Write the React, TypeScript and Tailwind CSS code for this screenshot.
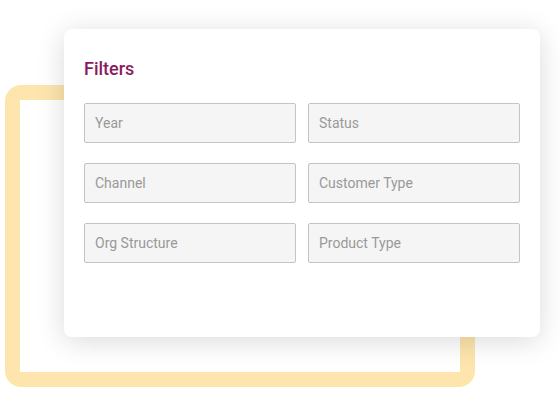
const FIELDS = ["Year", "Status", "Channel", "Customer Type", "Org Structure", "Product Type"];

export default function App() {
  return (
    <div className="relative w-[560px] h-[400px] bg-white overflow-hidden" style={{ fontFamily: "Roboto, 'Noto Sans', sans-serif" }}>
      {/* yellow frame behind the card */}
      <div className="absolute left-[5px] top-[85px] w-[470px] h-[302px] border-[15px] border-[#fee5ad] rounded-[16px]" />

      <div className="absolute left-[64px] top-[29px] w-[476px] h-[308px] bg-white rounded-[8px] shadow-[0_4px_28px_rgba(0,0,0,0.15)] px-5 pt-[26px]">
        <h2 className="text-lg leading-7 font-medium text-[#8a1c5e]">Filters</h2>
        <div className="grid grid-cols-2 gap-x-3 gap-y-5 mt-5">
          {FIELDS.map((f) => (
            <div
              key={f}
              className="h-10 border border-[#c4c4c4] bg-[#f5f5f5] rounded-[2px] flex items-center pl-[10px] text-sm text-[#999999]"
            >
              {f}
            </div>
          ))}
        </div>
      </div>
    </div>
  );
}
